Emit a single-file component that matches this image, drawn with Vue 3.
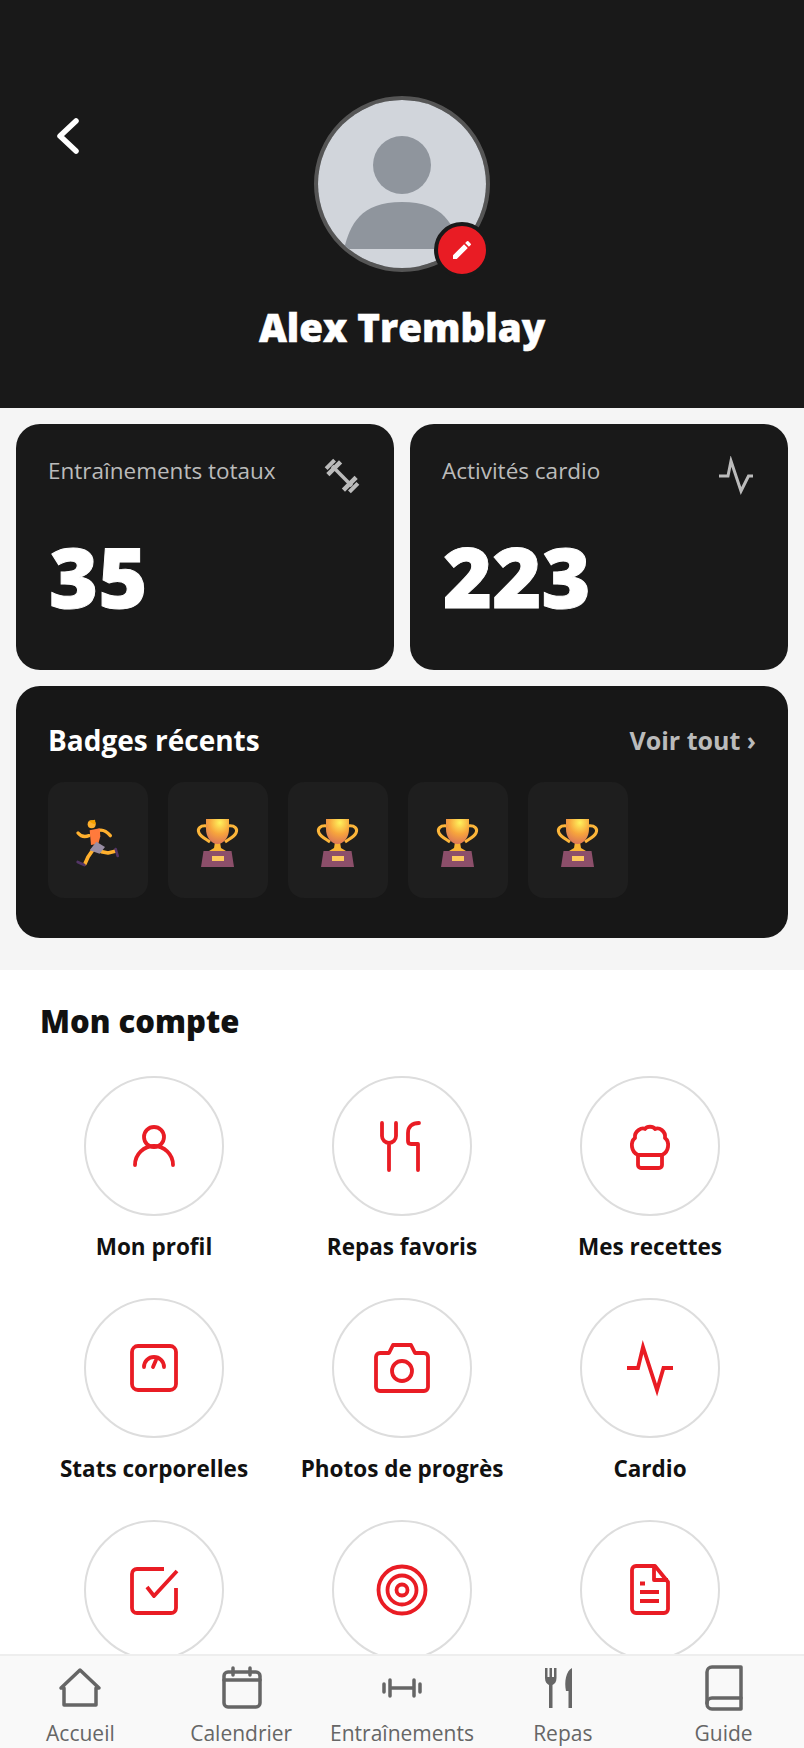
<script setup>
const redIcons = [
  { label: 'Mon profil', svg: '<circle cx="32" cy="23" r="10"/><path d="M13 51C13 40 22 32 32 32S51 40 51 51"/>' },
  { label: 'Repas favoris', svg: '<path d="M12 9V22a7 7 0 0 0 14 0V9M19 30V56"/><path d="M49 9C42 9 38 13 38 19V27Q38 30 41 30H48V56"/>' },
  { label: 'Mes recettes', svg: '<path d="M20 41C13 38 12 28 17 24C16 17 24 13 27 15C29 12 35 12 37 15C41 13 48 17 47 24C52 28 51 38 44 41"/><path d="M20 41H44V51a3 3 0 0 1-3 3H23a3 3 0 0 1-3-3Z"/>' },
  { label: 'Stats corporelles', svg: '<rect x="10" y="10" width="44" height="44" rx="6"/><path d="M22 31a10 10 0 0 1 20 0M31 31l3-7"/>' },
  { label: 'Photos de progrès', svg: '<path d="M10 17H19L23 9H41L45 17H54a4 4 0 0 1 4 4V51a4 4 0 0 1-4 4H10a4 4 0 0 1-4-4V21a4 4 0 0 1 4-4Z"/><circle cx="32" cy="35" r="10"/>' },
  { label: 'Cardio', svg: '<path stroke-linejoin="miter" stroke-linecap="butt" d="M9 32H20L25 11L39 54L45.500 32H55"/>' },
  { svg: '<path stroke-linecap="butt" d="M42 11H15a5 5 0 0 0-5 5V50a5 5 0 0 0 5 5H49a5 5 0 0 0 5-5V30"/><path stroke-linecap="butt" d="M25 29L32 38L55 13"/>' },
  { svg: '<circle cx="32" cy="32" r="23.500"/><circle cx="32" cy="32" r="14.500"/><circle cx="32" cy="32" r="5.500"/>' },
  { svg: '<path d="M18 8H37L50 24V51a4 4 0 0 1-4 4H18a4 4 0 0 1-4-4V12a4 4 0 0 1 4-4Z"/><path d="M36 8V22H50M22 34H41M22 43H41M22 25.500H27" stroke-linecap="butt"/>' },
]

const navItems = [
  { label: 'Accueil', svg: '<path d="M24 6L5 24H8V41H40V24H43Z"/>' },
  { label: 'Calendrier', svg: '<rect x="7" y="8" width="36" height="35" rx="4"/><path d="M7 16H43M16 4V11M33 4V11"/>' },
  { label: 'Entraînements', svg: '<path d="M6 20V28M12 16V32M36 16V32M42 20V28M12 24H36"/>' },
  { label: 'Repas', svg: '<path fill="#666" stroke="none" d="M6 4H8.500V13H10.500V4H13V13H15V4H17.500V14C17.500 18 15.500 20 13.500 21V44H10V21C8 20 6 18 6 14Z"/><path fill="#666" stroke="none" d="M33 4C27 7 25 18 27 27H29.500V44H33Z"/>' },
  { label: 'Guide', svg: '<path d="M12 3H41V45H12a5 5 0 0 1-5-5V8a5 5 0 0 1 5-5Z"/><path d="M7 39a5 5 0 0 1 5-5H41"/>' },
]

const badges = ['run', 'cup', 'cup', 'cup', 'cup']
</script>

<template>
  <div class="page">
    <div class="scroll">
      <header class="hero">
        <button class="back">
          <svg width="48" height="48" viewBox="0 0 48 48" fill="none" stroke="#fff" stroke-width="5.500" stroke-linecap="round" stroke-linejoin="round"><path d="M32 7L16 22L32 37"/></svg>
        </button>
        <div class="avatar">
          <svg class="avatar-img" viewBox="0 0 168 168">
            <rect width="168" height="168" fill="#d1d5db"/>
            <circle cx="84" cy="65" r="29" fill="#8f959d"/>
            <path d="M26 149C32 125 42 102 84 102C126 102 136 125 142 149Z" fill="#8f959d"/>
          </svg>
          <span class="edit">
            <svg width="24" height="24" viewBox="0 0 24 24" fill="#fff"><path d="M3 17.250V21h3.750L17.810 9.940l-3.750-3.750L3 17.250zM20.710 7.040a1 1 0 0 0 0-1.410l-2.340-2.340a1 1 0 0 0-1.410 0l-1.830 1.830 3.750 3.750 1.830-1.830z"/></svg>
          </span>
        </div>
        <h1 class="name">Alex Tremblay</h1>
      </header>

      <section class="stats">
        <div class="stat-row">
          <div class="card stat">
            <div class="stat-top">
              <span class="stat-label">Entraînements totaux</span>
              <svg width="40" height="40" viewBox="0 0 40 40" fill="none" stroke="#bbb" stroke-width="3.500"><g transform="rotate(45 20 20)"><path d="M6 20H34"/><path stroke-width="4.500" d="M9 11V29M31 11V29"/><path stroke-width="4" d="M3.500 14V26M36.500 14V26"/></g></svg>
            </div>
            <div class="stat-num">35</div>
          </div>
          <div class="card stat">
            <div class="stat-top">
              <span class="stat-label">Activités cardio</span>
              <svg width="40" height="40" viewBox="0 0 40 40" fill="none" stroke="#bbb" stroke-width="3"><path d="M3 20H12L15 5L25 35L32.500 20H37"/></svg>
            </div>
            <div class="stat-num">223</div>
          </div>
        </div>

        <div class="card badges">
          <div class="badges-head">
            <h2>Badges récents</h2>
            <span class="see-all">Voir tout ›</span>
          </div>
          <div class="badge-row">
            <div v-for="(b, i) in badges" :key="i" class="badge">
              <svg v-if="b === 'run'" width="50" height="50" viewBox="0 5 150 150" fill="none" stroke-linecap="round" stroke-linejoin="round">
                <path d="M15 50Q28 66 48 58M78 42Q95 38 112 58" stroke="#ffb02e" stroke-width="10"/>
                <path d="M60 100L45 122L36 142M85 106L105 110L126 105" stroke="#ffb02e" stroke-width="11"/>
                <path d="M14 137L34 146M128 98L134 119" stroke="#533566" stroke-width="8"/>
                <circle cx="56" cy="24" r="12" fill="#ffb02e"/>
                <path d="M47 14L66 10L68 24L60 22Z" fill="#f59f00"/>
                <path d="M50 42L80 36L82 60L76 82L54 86Z" fill="#ff7a3c"/>
                <path d="M50 102L70 76L96 92L80 112Z" fill="#998ea4"/>
              </svg>
              <svg v-else width="48" height="48" viewBox="0 0 48 48" fill="none">
                <defs>
                  <radialGradient :id="'cup' + i" cx="0.600" cy="0.150" r="0.900">
                    <stop offset="0" stop-color="#fff25c"/>
                    <stop offset="0.500" stop-color="#f7a53c"/>
                    <stop offset="1" stop-color="#d8705a"/>
                  </radialGradient>
                </defs>
                <path d="M13 7C6 6 3 10 5 14C7 18 12 20 16 23M34 7C41 6 44 10 42 14C40 18 35 20 31 23" stroke="#fbb53a" stroke-width="3"/>
                <path d="M21 23H26L27 29L32 32H15L20 29Z" fill="#f8b334"/>
                <path d="M12 0H35V10C35 18 30 25 23.500 25C17 25 12 18 12 10Z" :fill="'url(#cup' + i + ')'"/>
                <path d="M9.500 32H37.500L40 48H7Z" fill="#8c4f6a"/>
                <rect x="18" y="37" width="12" height="5" fill="#fcc85c"/>
              </svg>
            </div>
          </div>
        </div>
      </section>

      <section class="account">
        <h2>Mon compte</h2>
        <div class="menu">
          <div v-for="(item, i) in redIcons" :key="i" class="menu-item">
            <div class="circle">
              <svg width="64" height="64" viewBox="0 0 64 64" fill="none" stroke="#e91c24" stroke-width="3.800" stroke-linecap="round" stroke-linejoin="round" v-html="item.svg"></svg>
            </div>
            <span v-if="item.label" class="menu-label">{{ item.label }}</span>
          </div>
        </div>
      </section>
    </div>

    <nav class="bottom-nav">
      <div v-for="item in navItems" :key="item.label" class="nav-item">
        <svg width="48" height="48" viewBox="0 0 48 48" fill="none" stroke="#666" stroke-width="3.500" stroke-linecap="round" stroke-linejoin="round" v-html="item.svg"></svg>
        <span>{{ item.label }}</span>
      </div>
    </nav>
  </div>
</template>

<style scoped>
.page {
  height: 100vh;
  display: flex;
  flex-direction: column;
  background: #f5f5f5;
  font-family: "Open Sans", "Noto Sans", sans-serif;
  overflow: hidden;
}

.scroll {
  flex: 1;
  min-height: 0;
  overflow: hidden;
}

.hero {
  position: relative;
  height: 408px;
  box-sizing: border-box;
  padding-top: 96px;
  background: #191919;
  display: flex;
  flex-direction: column;
  align-items: center;
}

.back {
  position: absolute;
  left: 44px;
  top: 114px;
  width: 48px;
  height: 48px;
  padding: 0;
  border: 0;
  background: none;
}

.avatar {
  position: relative;
  width: 176px;
  height: 176px;
  flex: none;
}

.avatar-img {
  width: 100%;
  height: 100%;
  box-sizing: border-box;
  border: 4px solid #555;
  border-radius: 50%;
  display: block;
}

.edit {
  position: absolute;
  right: 0;
  bottom: -6px;
  width: 48px;
  height: 48px;
  border: 4px solid #191919;
  border-radius: 50%;
  background: #e91c24;
  display: flex;
  align-items: center;
  justify-content: center;
}

.name {
  margin: 31px 0 0;
  font-size: 38.500px;
  line-height: 48px;
  font-weight: 800;
  color: #fff;
  -webkit-text-stroke: 0.5px #fff;
}

.stats {
  padding: 16px 16px 32px;
}

.stat-row {
  display: grid;
  grid-template-columns: 1fr 1fr;
  gap: 16px;
}

.card {
  background: #191919;
  border-radius: 24px;
}

.stat {
  height: 246px;
  box-sizing: border-box;
  padding: 32px;
}

.stat-top {
  display: flex;
  justify-content: space-between;
  align-items: flex-start;
}

.stat-label {
  font-size: 22.500px;
  line-height: 30px;
  color: #bbb;
}

.stat-num {
  margin-top: 32px;
  padding-left: 1px;
  font-size: 84px;
  line-height: 96px;
  font-weight: 800;
  color: #fff;
  -webkit-text-stroke: 1px #fff;
}

.badges {
  margin-top: 16px;
  padding: 32px 32px 40px;
  background: #171717;
}

.badges-head {
  display: flex;
  justify-content: space-between;
  align-items: center;
  height: 44px;
  margin-bottom: 20px;
}

.badges-head h2 {
  margin: 0;
  font-size: 28px;
  font-weight: 700;
  color: #fff;
}

.see-all {
  font-size: 25px;
  font-weight: 700;
  color: #bbb;
}

.badge-row {
  display: flex;
  gap: 20px;
}

.badge {
  width: 100px;
  height: 116px;
  box-sizing: border-box;
  padding-top: 6px;
  border-radius: 16px;
  background: #1e1e1e;
  display: flex;
  align-items: center;
  justify-content: center;
}

.account {
  background: #fff;
  padding: 31px 40px 40px;
}

.account h2 {
  margin: 0 0 35px;
  font-size: 31px;
  line-height: 40px;
  font-weight: 800;
  color: #111;
}

.menu {
  display: grid;
  grid-template-columns: repeat(3, 1fr);
  gap: 34px 20px;
}

.menu-item {
  display: flex;
  flex-direction: column;
  align-items: center;
  gap: 15px;
}

.circle {
  width: 140px;
  height: 140px;
  box-sizing: border-box;
  border: 2px solid #ddd;
  border-radius: 50%;
  display: flex;
  align-items: center;
  justify-content: center;
}

.menu-label {
  height: 32px;
  margin-bottom: 1px;
  font-size: 22.500px;
  line-height: 32px;
  font-weight: 700;
  color: #111;
  white-space: nowrap;
}

.bottom-nav {
  flex: none;
  height: 94px;
  box-sizing: border-box;
  border-top: 2px solid #eee;
  background: #f9f9f9;
  display: grid;
  grid-template-columns: repeat(5, 1fr);
  padding-top: 8px;
}

.nav-item {
  display: flex;
  flex-direction: column;
  align-items: center;
  font-size: 21px;
  line-height: 28px;
  color: #666;
  white-space: nowrap;
  gap: 7px;
}
</style>
